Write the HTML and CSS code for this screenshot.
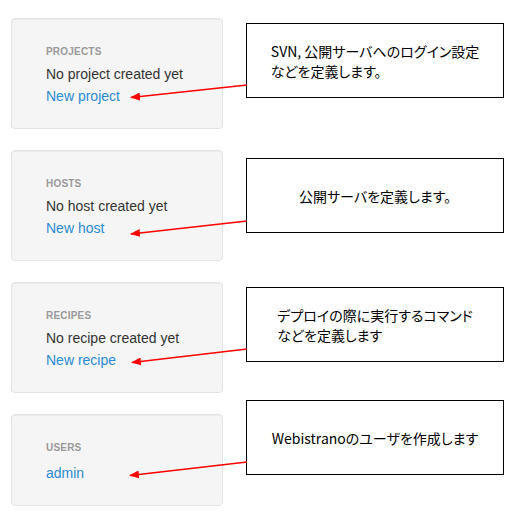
FILE: index.html
```html
<!DOCTYPE html>
<html lang="ja">
<head>
<meta charset="utf-8">
<title>Webistrano dashboard</title>
<link rel="stylesheet" href="styles.css">
</head>
<body>
<main class="page">
  <section class="cards">
    <div class="card">
      <h4 class="card-title">Projects</h4>
      <p class="card-line">No project created yet</p>
      <a class="card-link" href="#">New project</a>
    </div>
    <div class="card">
      <h4 class="card-title">Hosts</h4>
      <p class="card-line">No host created yet</p>
      <a class="card-link" href="#">New host</a>
    </div>
    <div class="card">
      <h4 class="card-title">Recipes</h4>
      <p class="card-line">No recipe created yet</p>
      <a class="card-link" href="#">New recipe</a>
    </div>
    <div class="card">
      <h4 class="card-title">Users</h4>
      <a class="card-link card-link--first" href="#">admin</a>
    </div>
  </section>
  <section class="notes">
    <div class="note note--1"><p class="note-text">SVN, 公開サーバへのログイン設定<br>などを定義します。</p></div>
    <div class="note note--2"><p class="note-text">公開サーバを定義します。</p></div>
    <div class="note note--3"><p class="note-text">デプロイの際に実行するコマンド<br>などを定義します</p></div>
    <div class="note note--4"><p class="note-text">Webistranoのユーザを作成します</p></div>
  </section>
  <svg class="arrows" width="523" height="524" viewBox="0 0 523 524" aria-hidden="true">
    <defs>
      <marker id="head" markerUnits="userSpaceOnUse" markerWidth="10" markerHeight="8" refX="9" refY="4" orient="auto">
        <path d="M0,0 L10,4 L0,8 z" fill="#ff0000"/>
      </marker>
    </defs>
    <line x1="247" y1="85" x2="131" y2="97.5" stroke="#ff0000" stroke-width="1.5" marker-end="url(#head)"/>
    <line x1="247" y1="221" x2="131" y2="234" stroke="#ff0000" stroke-width="1.5" marker-end="url(#head)"/>
    <line x1="247" y1="349" x2="132" y2="362.5" stroke="#ff0000" stroke-width="1.5" marker-end="url(#head)"/>
    <line x1="247" y1="462" x2="130" y2="475.5" stroke="#ff0000" stroke-width="1.5" marker-end="url(#head)"/>
  </svg>
</main>
</body>
</html>
```

FILE: styles.css
```css
* { box-sizing: border-box; }

html, body {
  margin: 0;
  padding: 0;
  background: #ffffff;
}

.page {
  position: relative;
  width: 523px;
  height: 524px;
  display: grid;
  grid-template-columns: 212px 258px;
  column-gap: 23px;
  align-items: start;
  padding: 18px 0 0 11px;
  overflow: hidden;
}

.cards {
  display: flex;
  flex-direction: column;
  gap: 21px;
}

.card {
  display: flex;
  flex-direction: column;
  align-items: flex-start;
  background: #f5f5f5;
  border: 1px solid #e3e3e3;
  border-radius: 4px;
  box-shadow: inset 0 1px 1px rgba(0, 0, 0, 0.05);
  padding: 25px 20px 21px 34px;
  font-family: "Liberation Sans", Arial, sans-serif;
}

.card-title {
  margin: 0 0 3px;
  font-size: 10px;
  line-height: 16px;
  font-weight: bold;
  letter-spacing: 0.2px;
  text-transform: uppercase;
  color: #999999;
}

.card-line {
  margin: 0;
  font-size: 14px;
  line-height: 22px;
  color: #333333;
}

.card-link {
  font-size: 14px;
  line-height: 22px;
  color: #2a8ad2;
  text-decoration: none;
}

.card-link--first {
  margin-top: 3px;
}

.notes {
  display: flex;
  flex-direction: column;
  margin-top: 5px;
}

.note {
  height: 75px;
  border: 1px solid #000000;
  background: #ffffff;
  display: flex;
  align-items: center;
  justify-content: center;
}

.note--2 { margin-top: 60px; }
.note--3 { margin-top: 54px; }
.note--4 { margin-top: 38px; }

.note-text {
  margin: 0;
  font-family: "MS UI Gothic", "Noto Sans CJK JP", sans-serif;
  font-feature-settings: "palt";
  font-size: 14px;
  line-height: 20px;
  color: #000000;
  text-align: left;
}

.arrows {
  position: absolute;
  top: 0;
  left: 0;
  pointer-events: none;
}
```
